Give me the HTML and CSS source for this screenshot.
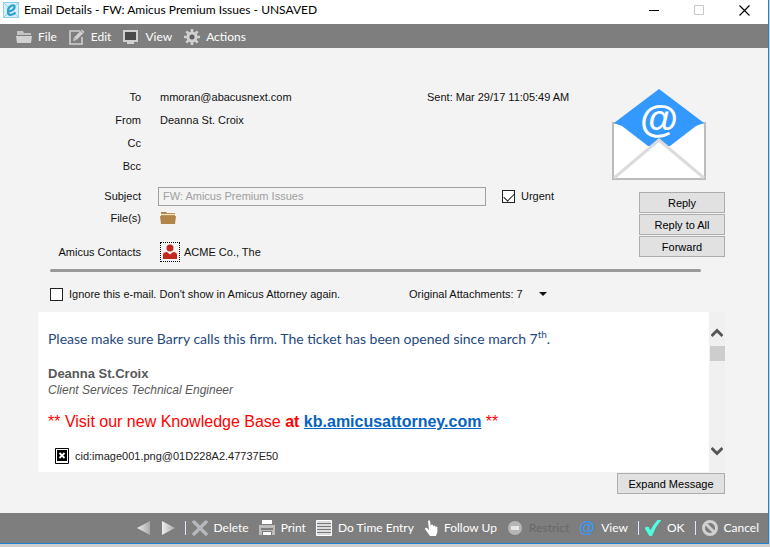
FILE: index.html
```
<!DOCTYPE html>
<html lang="en">
<head>
    <meta charset="UTF-8">
    <meta name="viewport" content="width=device-width, initial-scale=1.0">
    <title>Email Details - FW: Amicus Premium Issues - UNSAVED</title>
    <link rel="stylesheet" href="styles.css">
</head>
<body>
<div class="window">
    <header class="titlebar">
        <svg class="app-icon" width="16" height="16" viewBox="0 0 16 16">
            <rect x="0.5" y="0.5" width="15" height="15" fill="#d5f0fa" stroke="#8fd3ee"/>
            <path d="M0 0l5 5M16 0l-5 5M0 16l5-5M16 16l-5-5" stroke="#8fd3ee"/>
            <path d="M4 9.500C8 9.500 12 7.500 11.500 4.500C11 2 5.500 3.500 5 8.500C4.500 14 9 14 12.500 10.500" fill="none" stroke="#2d9fd0" stroke-width="2.200"/>
        </svg>
        <h1>Email Details - FW: Amicus Premium Issues - UNSAVED</h1>
        <div class="window-buttons">
            <button type="button" aria-label="Minimize"><svg width="11" height="11" viewBox="0 0 11 11"><path d="M0 5.500h10" stroke="#000"/></svg></button>
            <button type="button" aria-label="Maximize" disabled><svg width="11" height="11" viewBox="0 0 11 11"><path d="M.5 .5h9v9h-9z" fill="none" stroke="#c8c8c8"/></svg></button>
            <button type="button" aria-label="Close"><svg width="11" height="11" viewBox="0 0 11 11"><path d="M.5 .5l10 10M10.500 .5l-10 10" stroke="#000" stroke-width="1.200"/></svg></button>
        </div>
    </header>

    <nav class="menubar">
        <button type="button">
            <svg width="16" height="16" viewBox="0 0 16 16"><path d="M1 2h6l1 2h7v2H1z" fill="#c4c4c4"/><path d="M0 7h16l-1 7H1z" fill="#d2d2d2"/></svg>
            File
        </button>
        <button type="button">
            <svg width="16" height="16" viewBox="0 0 16 16"><path d="M11 2H1v13h12V8" fill="none" stroke="#d0d0d0" stroke-width="1.600"/><path d="M4 12l1-3.500L13 .5l2.500 2.500L7.500 11z" fill="#d0d0d0"/><path d="M5.500 9l1.500 1.500M12 2l2 2" stroke="#7e7e7e" stroke-width=".8"/></svg>
            Edit
        </button>
        <button type="button">
            <svg width="16" height="16" viewBox="0 0 16 16"><path d="M1 2h13v10H1z" fill="#4a4a4a" stroke="#d0d0d0" stroke-width="2"/><path d="M4 13h7v2H4z" fill="#d0d0d0"/></svg>
            View
        </button>
        <button type="button">
            <svg width="16" height="16" viewBox="0 0 16 16"><path d="M8 0v16M0 8h16M2.300 2.300l11.400 11.400M13.700 2.300L2.300 13.700" stroke="#d0d0d0" stroke-width="2.600"/><circle cx="8" cy="8" r="4" fill="#5e5e5e" stroke="#d0d0d0" stroke-width="3"/></svg>
            Actions
        </button>
    </nav>

    <main class="content">
        <section class="details">
            <div class="fields">
                <div class="field"><span class="label">To</span><span class="value">mmoran@abacusnext.com</span><span class="sent">Sent: Mar 29/17 11:05:49 AM</span></div>
                <div class="field"><span class="label">From</span><span class="value">Deanna St. Croix</span></div>
                <div class="field"><span class="label">Cc</span></div>
                <div class="field"><span class="label">Bcc</span></div>
                <div class="field subject">
                    <label class="label" for="subject">Subject</label>
                    <input class="subject-input" type="text" id="subject" value="FW: Amicus Premium Issues" disabled>
                    <label class="check"><input type="checkbox" checked> Urgent</label>
                </div>
                <div class="field files">
                    <span class="label">File(s)</span>
                    <svg width="16" height="16" viewBox="0 0 16 16"><path d="M1 2h5l1 1h8v3H1z" fill="#a5793f"/><path d="M1 4.500h14" stroke="#f2e3b0" stroke-width="1.500"/><path d="M0 6h16l-1 8H1z" fill="#b3854a"/></svg>
                </div>
                <div class="field contacts">
                    <span class="label">Amicus Contacts</span>
                    <button class="contact" type="button" aria-label="Open contact"><svg width="16" height="16" viewBox="0 0 16 16"><circle cx="8" cy="4" r="3.500" fill="#c4281f"/><path d="M1 15v-4q0-3 4-3l3 2.500L11 8q4 0 4 3v4z" fill="#c4281f"/></svg></button>
                    <span>ACME Co., The</span>
                </div>
            </div>
            <aside class="side">
                <svg class="envelope" width="96" height="92" viewBox="0 0 96 92">
                    <path d="M2 34h92v56H2z" fill="#fff" stroke="#bcbcbc" stroke-width="2"/>
                    <path d="M3 34L48 0l45 34-8 3-26 20H37L11 37z" fill="#3399ff"/>
                    <path d="M3 89l45-38 45 38" fill="#fff" stroke="#dcdcdc" stroke-width="3"/>
                    <text x="48" y="43" class="at-sign">@</text>
                </svg>
                <button class="btn" type="button">Reply</button>
                <button class="btn" type="button">Reply to All</button>
                <button class="btn" type="button">Forward</button>
            </aside>
        </section>

        <hr class="rule">

        <div class="options">
            <label class="check"><input type="checkbox"> Ignore this e-mail. Don't show in Amicus Attorney again.</label>
            <button class="attachments" type="button">Original Attachments: 7 <svg width="8" height="4" viewBox="0 0 8 4"><path d="M0 0h8L4 4z" fill="#111"/></svg></button>
        </div>

        <section class="message">
            <article class="message-body">
                <p class="request">Please make sure Barry calls this firm. The ticket has been opened since march 7<sup>th</sup>.</p>
                <p class="name">Deanna St.Croix</p>
                <p class="role">Client Services Technical Engineer</p>
                <p class="visit">** Visit our new Knowledge Base <b>at <a href="#">kb.amicusattorney.com</a></b> **</p>
                <p class="image-row">
                    <svg width="14" height="16" viewBox="0 0 14 16"><path d="M.5 .5h13v15H.5z" fill="#fff" stroke="#000"/><path d="M2 2h10v11H2z" fill="#000"/><path d="M4.500 5l5 5M9.500 5l-5 5" stroke="#fff" stroke-width="1.800"/></svg>
                    cid:image001.png@01D228A2.47737E50
                </p>
            </article>
            <div class="scrollbar">
                <svg width="12" height="10" viewBox="0 0 12 10"><path d="M.5 8L6 2.500 11.500 8" fill="none" stroke="#555" stroke-width="3"/></svg>
                <div class="thumb"></div>
                <svg class="down" width="12" height="10" viewBox="0 0 12 10"><path d="M.5 2L6 7.500 11.500 2" fill="none" stroke="#555" stroke-width="3"/></svg>
            </div>
        </section>
        <button class="btn expand" type="button">Expand Message</button>
    </main>

    <footer class="actionbar">
        <button type="button" aria-label="Previous"><svg width="14" height="14" viewBox="0 0 14 14"><defs><linearGradient id="shade"><stop offset="0" stop-color="#eee"/><stop offset="1" stop-color="#aaa"/></linearGradient></defs><path d="M13 0v14L0 7z" fill="url(#shade)"/></svg></button>
        <button type="button" aria-label="Next"><svg width="14" height="14" viewBox="0 0 14 14"><path d="M1 0v14l13-7z" fill="url(#shade)"/></svg></button>
        <span class="separator"></span>
        <button type="button"><svg width="16" height="16" viewBox="0 0 16 16"><path d="M2 2l12 12M14 2L2 14" stroke="#b4b8bc" stroke-width="3.500" stroke-linecap="round"/></svg>Delete</button>
        <button type="button"><svg width="16" height="16" viewBox="0 0 16 16"><path d="M3 0h10v4H3z" fill="#fff"/><path d="M0 5h16v10H0z" fill="#bcbcbc"/><path d="M2 8h12v2H2z" fill="#7e7e7e"/><path d="M3 11h10v5H3z" fill="#7e7e7e"/><path d="M4 12h8v3H4z" fill="#fff"/></svg>Print</button>
        <button type="button"><svg width="16" height="16" viewBox="0 0 16 16"><path d="M.5 .5h15v15H.5z" fill="#ddd" stroke="#fff"/><path d="M1 3.500h14M1 6.500h14M1 9.500h14M1 12.500h14" stroke="#777"/></svg>Do Time Entry</button>
        <button type="button"><svg class="hand" width="14" height="16" viewBox="0 0 14 16"><path d="M4 1q1.500-1.500 2 0l1 6V5q1-1 2 0l.3 2V6q1-1 2 0l.3 2V7q1-1 1.800 0v5l-1.500 4H6L1 9q0-2 2-1l2 2z" fill="#fff"/></svg>Follow Up</button>
        <button type="button" disabled><svg width="16" height="16" viewBox="0 0 16 16"><circle cx="8" cy="8" r="7" fill="#b5b5b5"/><path d="M4 6h8v4H4z" fill="#e6e6e6"/></svg>Restrict</button>
        <button type="button"><svg width="16" height="16" viewBox="0 0 16 16"><text x="8" y="13" class="view-at">@</text></svg>View</button>
        <span class="separator"></span>
        <button type="button"><svg width="16" height="16" viewBox="0 0 16 16"><path d="M0 8l3-1 2.500 4Q9 4 13 0H16Q10 6 6.500 16H5z" fill="#4dffe0" stroke="#4dffe0"/></svg>OK</button>
        <span class="separator"></span>
        <button type="button"><svg width="16" height="16" viewBox="0 0 16 16"><circle cx="8" cy="8" r="6.500" fill="none" stroke="#d0d0d0" stroke-width="3"/><path d="M4 4l8 8" stroke="#d0d0d0" stroke-width="3"/></svg>Cancel</button>
    </footer>
</div>
</body>
</html>
```
FILE: styles.css
```
* {
    box-sizing: border-box;
}

body {
    margin: 0;
    background-color: #cfcfcf;
    color: #111;
    font: 11px/16px "Liberation Sans", Arial, sans-serif;
}

button {
    border: 0;
    padding: 0;
    background: none;
    color: inherit;
    font: inherit;
}

svg {
    flex: none;
}

.window {
    margin-right: 1px;
    border-right: 1px solid #1883d7;
    border-bottom: 1px solid #1883d7;
    background-color: #f3f3f3;
}

/* Title bar */
.titlebar {
    display: flex;
    align-items: center;
    height: 24px;
    padding: 0 18px 4px 3px;
    background-color: #fff;
}

.titlebar h1 {
    flex: 1;
    margin: 0 0 0 5px;
    color: #000;
    font: 12px/16px Lato, sans-serif;
}

.window-buttons {
    display: flex;
    gap: 34px;
}

.window-buttons button {
    display: flex;
}

/* File, Edit, View, Actions */
.menubar {
    display: flex;
    gap: 12px;
    height: 24px;
    padding: 2px 0 0 16px;
}

.menubar, .actionbar {
    align-items: center;
    background-color: #7e7e7e;
    color: #fff;
    font: 12px/16px Lato, sans-serif;
}

.menubar button, .actionbar button {
    display: flex;
    align-items: center;
    gap: 6px;
    white-space: nowrap;
}

/* Message header */
.content {
    display: flex;
    flex-direction: column;
    padding: 37px 43px 19px 38px;
}

.details {
    display: flex;
    justify-content: space-between;
}

.fields {
    flex: 1;
}

.field {
    display: flex;
    align-items: center;
    height: 23px;
}

.label {
    width: 103px;
    margin-right: 19px;
    text-align: right;
}

.value {
    flex: 0 0 267px;
}

.subject {
    height: 30px;
    margin-top: 4px;
}

.subject-input {
    width: 328px;
    height: 19px;
    margin: 0 16px 0 -2px;
    border: 1px solid #a0a0a0;
    padding: 0 4px;
    background-color: #f3f3f3;
    color: #a0a0a0;
    font: inherit;
}

.files {
    height: 14px;
}

.contacts {
    height: 44px;
    padding-top: 10px;
}

.contact {
    display: flex;
    margin-right: 4px;
    border: 1px dotted #000;
    padding: 1px;
}

.check {
    display: flex;
    align-items: center;
    gap: 6px;
}

.check input {
    appearance: none;
    width: 13px;
    height: 13px;
    margin: 0;
    border: 1px solid #222;
    background-color: #fff;
}

.check input:checked::before {
    content: "";
    display: block;
    width: 9px;
    height: 5px;
    margin: 2px 1px;
    border-left: 1px solid #222;
    border-bottom: 1px solid #222;
    transform: rotate(-45deg);
}

.side {
    display: flex;
    flex-direction: column;
    align-items: flex-end;
    gap: 1px;
}

.envelope {
    margin: 4px 18px 10px 0;
}

.at-sign {
    fill: #fff;
    font: bold 39px "Liberation Sans", sans-serif;
    text-anchor: middle;
}

.btn {
    width: 86px;
    height: 21px;
    border: 1px solid #adadad;
    background-color: #e1e1e1;
    color: #000;
}

.rule {
    width: calc(100% - 36px);
    height: 3px;
    margin: 0 0 0 12px;
    border: 0;
    border-radius: 2px;
    background-color: #999;
}

.options {
    display: flex;
    align-items: center;
    height: 40px;
    padding: 4px 0 0 12px;
}

.options .check {
    width: 359px;
}

.attachments {
    display: flex;
    align-items: center;
    gap: 16px;
}

/* Message */
.message {
    display: flex;
    min-height: 160px;
    background-color: #fff;
}

.message-body {
    flex: 1;
    padding: 18px 10px 8px;
}

.message-body p {
    margin: 0;
}

.message-body .request {
    margin-bottom: 18px;
    color: #1f497d;
    font: 14px/18px Lato, sans-serif;
}

.request sup {
    font-size: 10px;
    line-height: 0;
}

.message-body .name {
    color: #595959;
    font: bold 13px/16px "Liberation Sans", sans-serif;
}

.message-body .role {
    margin-bottom: 14px;
    color: #595959;
    font: italic 12px/16px "Liberation Sans", sans-serif;
}

.message-body .visit {
    color: #f00;
    font: 16px/20px "Liberation Sans", sans-serif;
}

.visit a {
    color: #0563c1;
}

.message-body .image-row {
    display: flex;
    align-items: center;
    gap: 6px;
    margin: 16px 0 0 7px;
    color: #222;
}

.scrollbar {
    display: flex;
    flex-direction: column;
    align-items: center;
    width: 16px;
    padding: 16px 0;
    background-color: #f0f0f0;
}

.thumb {
    width: 15px;
    height: 15px;
    margin-top: 8px;
    background-color: #cdcdcd;
}

.scrollbar .down {
    margin-top: auto;
}

.expand {
    align-self: flex-end;
    width: 108px;
    margin-top: 1px;
}

/* Bottom toolbar */
.actionbar {
    display: flex;
    justify-content: flex-end;
    gap: 10px;
    height: 30px;
    padding-right: 9px;
}

.actionbar button:disabled {
    color: #686868;
}

.separator {
    width: 1px;
    height: 14px;
    margin-right: -4px;
    background-color: #dce6ff;
}

.view-at {
    fill: #3399ff;
    font: bold 16px "Liberation Sans", sans-serif;
    text-anchor: middle;
}
```
